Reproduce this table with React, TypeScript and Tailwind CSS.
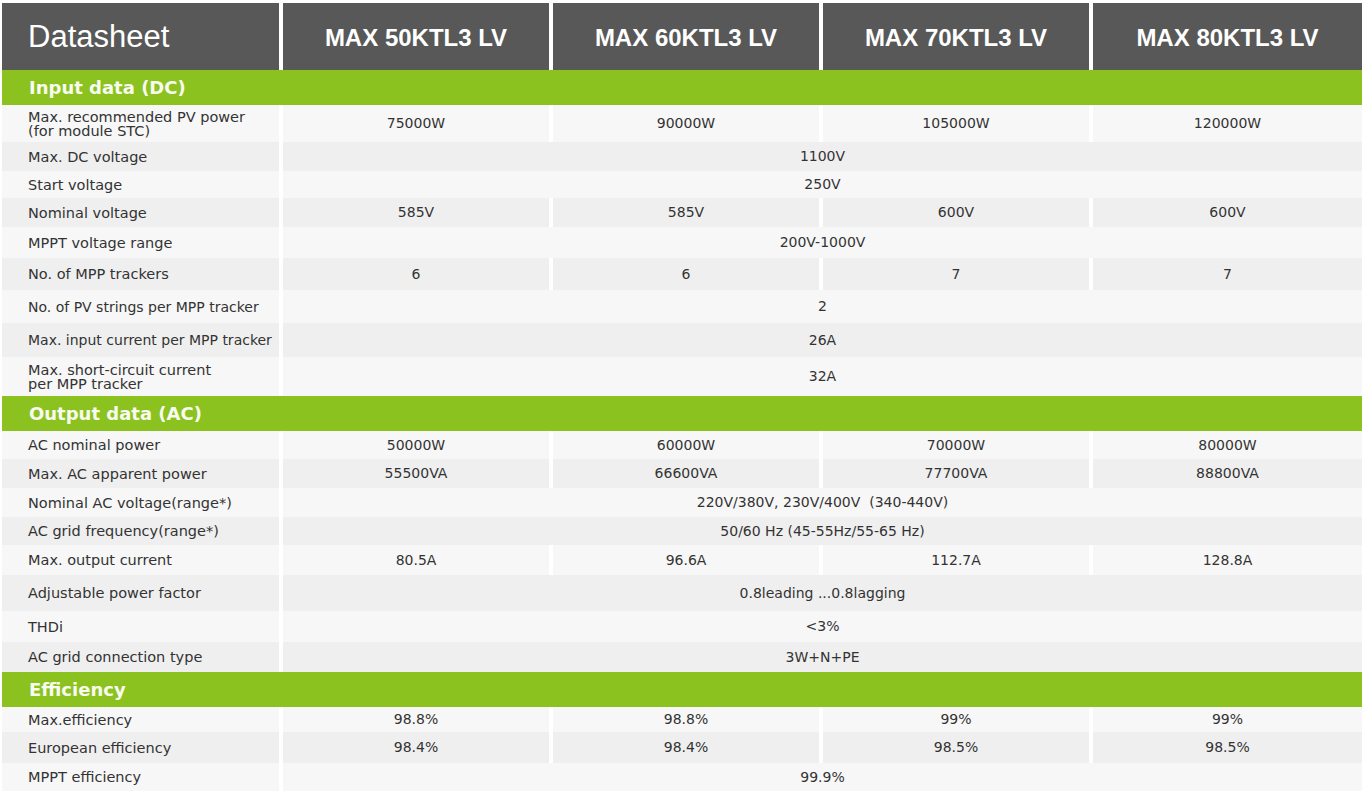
import React from "react";

type Row =
  | { kind: "section"; title: string }
  | { kind: "data"; label: string[]; values: string[]; h: string; dark: boolean; small?: boolean };

const rows: Row[] = [
  { kind: "section", title: "Input data (DC)" },
  { kind: "data", label: ["Max. recommended PV power", "(for module STC)"], values: ["75000W", "90000W", "105000W", "120000W"], h: "h-[37px]", dark: false },
  { kind: "data", label: ["Max. DC voltage"], values: ["1100V"], h: "h-[29px]", dark: true },
  { kind: "data", label: ["Start voltage"], values: ["250V"], h: "h-[27px]", dark: false },
  { kind: "data", label: ["Nominal voltage"], values: ["585V", "585V", "600V", "600V"], h: "h-[29px]", dark: true },
  { kind: "data", label: ["MPPT voltage range"], values: ["200V-1000V"], h: "h-[31px]", dark: false },
  { kind: "data", label: ["No. of MPP trackers"], values: ["6", "6", "7", "7"], h: "h-[32px]", dark: true },
  { kind: "data", label: ["No. of PV strings per MPP tracker"], values: ["2"], h: "h-[33px]", dark: false, small: true },
  { kind: "data", label: ["Max. input current per MPP tracker"], values: ["26A"], h: "h-[34px]", dark: true, small: true },
  { kind: "data", label: ["Max. short-circuit current", "per MPP tracker"], values: ["32A"], h: "h-[39px]", dark: false },
  { kind: "section", title: "Output data (AC)" },
  { kind: "data", label: ["AC nominal power"], values: ["50000W", "60000W", "70000W", "80000W"], h: "h-[28px]", dark: false },
  { kind: "data", label: ["Max. AC apparent power"], values: ["55500VA", "66600VA", "77700VA", "88800VA"], h: "h-[29px]", dark: true },
  { kind: "data", label: ["Nominal AC voltage(range*)"], values: ["220V/380V, 230V/400V  (340-440V)"], h: "h-[29px]", dark: false },
  { kind: "data", label: ["AC grid frequency(range*)"], values: ["50/60 Hz (45-55Hz/55-65 Hz)"], h: "h-[28px]", dark: true },
  { kind: "data", label: ["Max. output current"], values: ["80.5A", "96.6A", "112.7A", "128.8A"], h: "h-[30px]", dark: false },
  { kind: "data", label: ["Adjustable power factor"], values: ["0.8leading ...0.8lagging"], h: "h-[36px]", dark: true },
  { kind: "data", label: ["THDi"], values: ["<3%"], h: "h-[31px]", dark: false },
  { kind: "data", label: ["AC grid connection type"], values: ["3W+N+PE"], h: "h-[30px]", dark: true },
  { kind: "section", title: "Efficiency" },
  { kind: "data", label: ["Max.efficiency"], values: ["98.8%", "98.8%", "99%", "99%"], h: "h-[25px]", dark: false },
  { kind: "data", label: ["European efficiency"], values: ["98.4%", "98.4%", "98.5%", "98.5%"], h: "h-[31px]", dark: true },
  { kind: "data", label: ["MPPT efficiency"], values: ["99.9%"], h: "h-[28px]", dark: false },
];

const models = ["MAX 50KTL3 LV", "MAX 60KTL3 LV", "MAX 70KTL3 LV", "MAX 80KTL3 LV"];

const grid = "grid grid-cols-[277px_266px_266px_266px_269px] gap-x-[4px]";

export default function App() {
  return (
    <div className="w-[1365px] h-[791px] overflow-hidden bg-white pt-[3px] pl-[2px]">
      <div className="w-[1360px] flex flex-col">
        <div className={`${grid} h-[67px]`}>
          <div className="bg-[#585858] flex items-center pl-[26px] text-white text-[31px] font-['Liberation_Sans',sans-serif] pt-[2px]">
            Datasheet
          </div>
          {models.map((m) => (
            <div
              key={m}
              className="bg-[#585858] flex items-center justify-center text-white text-[24px] font-bold font-['Liberation_Sans',sans-serif] pt-[2px]"
            >
              {m}
            </div>
          ))}
        </div>
        {rows.map((r, i) =>
          r.kind === "section" ? (
            <div
              key={i}
              className="h-[35px] bg-[#8cc21f] flex items-center pl-[27px] text-[#f8fbef] text-[18px] font-bold font-['DejaVu_Sans',sans-serif]"
            >
              {r.title}
            </div>
          ) : (
            <div key={i} className={`${grid} ${r.h}`}>
              <div
                className={`${r.dark ? "bg-[#efefef]" : "bg-[#f7f7f7]"} ${r.small ? "text-[14px]" : "text-[14.5px]"} flex flex-col justify-center pl-[26px] text-[#333333] whitespace-nowrap font-['DejaVu_Sans',sans-serif]`}
              >
                {r.label.map((l) => (
                  <span key={l} className={r.label.length > 1 ? "leading-[14px]" : "leading-[18px]"}>
                    {l}
                  </span>
                ))}
              </div>
              {r.values.length === 1 ? (
                <div
                  className={`${r.dark ? "bg-[#efefef]" : "bg-[#f7f7f7]"} col-span-4 flex items-center justify-center text-[#333333] text-[14px] whitespace-pre font-['DejaVu_Sans',sans-serif]`}
                >
                  {r.values[0]}
                </div>
              ) : (
                r.values.map((v, j) => (
                  <div
                    key={j}
                    className={`${r.dark ? "bg-[#efefef]" : "bg-[#f7f7f7]"} flex items-center justify-center text-[#333333] text-[14px] font-['DejaVu_Sans',sans-serif]`}
                  >
                    {v}
                  </div>
                ))
              )}
            </div>
          )
        )}
      </div>
    </div>
  );
}
